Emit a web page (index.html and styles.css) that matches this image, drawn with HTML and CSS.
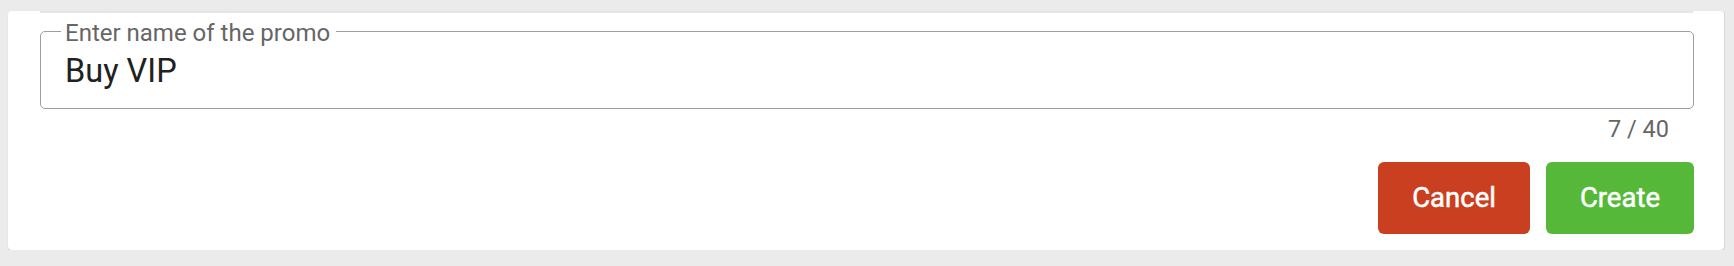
FILE: index.html
```html
<!DOCTYPE html>
<html>
<head>
<meta charset="utf-8">
<link rel="stylesheet" href="styles.css">
</head>
<body>
<div class="page">
  <div class="card">
    <div class="strip"></div>
    <div class="content">
      <div class="field">
        <span class="label">Enter name of the promo</span>
        <div class="value">Buy VIP</div>
      </div>
      <div class="counter">7 / 40</div>
      <div class="actions">
        <button class="btn btn-cancel">Cancel</button>
        <button class="btn btn-create">Create</button>
      </div>
    </div>
  </div>
</div>
</body>
</html>
```
FILE: styles.css
```css
html, body {
  margin: 0;
  padding: 0;
  background: #ebebeb;
  font-family: Roboto, "Liberation Sans", sans-serif;
}
.page {
  padding: 11px 10px 0 8px;
}
.card {
  background: #ffffff;
  border-radius: 4px;
  box-shadow: 0 1px 1px rgba(0, 0, 0, 0.14), 1px 0 1px rgba(0, 0, 0, 0.07);
  height: 239px;
  box-sizing: border-box;
  display: flex;
  flex-direction: column;
}
.strip {
  height: 2px;
  margin: 0 31px 0 32px;
  background: #e6e6e6;
}
.content {
  padding: 18px 30px 0 32px;
  display: flex;
  flex-direction: column;
}
.field {
  position: relative;
  border: 1.5px solid #9e9e9e;
  border-radius: 5px;
  height: 78px;
  box-sizing: border-box;
  padding: 23px 22px 0 24px;
}
.label {
  position: absolute;
  top: -11px;
  left: 20px;
  padding: 0 6px 0 4px;
  background: #ffffff;
  color: #666666;
  font-size: 24px;
  line-height: 1;
}
.value {
  font-size: 32.5px;
  line-height: 1;
  color: #212121;
}
.counter {
  align-self: flex-end;
  margin: 9px 25px 0 0;
  font-size: 23.5px;
  line-height: 1;
  color: #666666;
}
.actions {
  display: flex;
  justify-content: flex-end;
  gap: 16px;
  margin-top: 20px;
}
.btn {
  border: none;
  border-radius: 6px;
  height: 72px;
  padding: 0 34px;
  font-family: Roboto, "Liberation Sans", sans-serif;
  font-weight: 400;
  -webkit-text-stroke: 0.5px #ffffff;
  font-size: 27.5px;
  line-height: 1;
  color: #ffffff;
  display: flex;
  align-items: center;
}
.btn-cancel {
  background: #cb3f21;
}
.btn-create {
  background: #55b839;
}
```
